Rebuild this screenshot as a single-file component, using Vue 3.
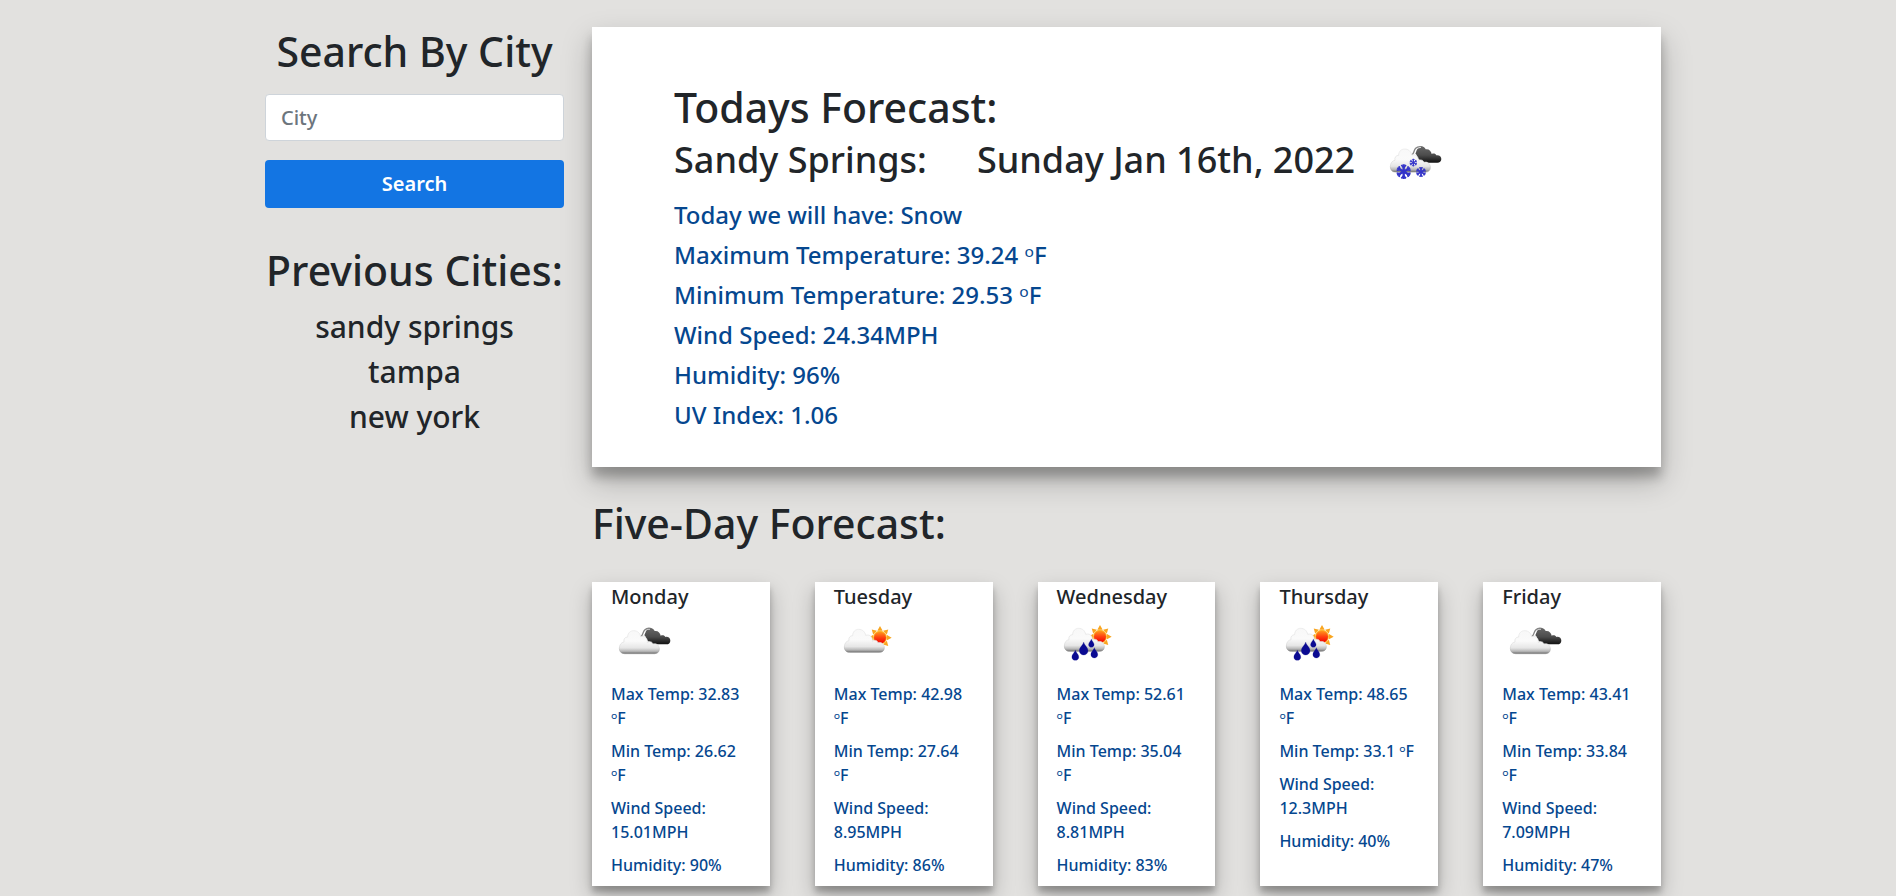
<script setup>
import { ref } from 'vue'

const city = ref('')
const previous = ['sandy springs', 'tampa', 'new york']
const details = [
  { text: 'Today we will have: Snow' },
  { text: 'Maximum Temperature: 39.24', degrees: true },
  { text: 'Minimum Temperature: 29.53', degrees: true },
  { text: 'Wind Speed: 24.34MPH' },
  { text: 'Humidity: 96%' },
  { text: 'UV Index: 1.06' },
]
const days = [
  { name: 'Monday', icon: 'clouds', max: '32.83', min: '26.62', wind: '15.01', humidity: 90 },
  { name: 'Tuesday', icon: 'sun', max: '42.98', min: '27.64', wind: '8.95', humidity: 86 },
  { name: 'Wednesday', icon: 'rain', max: '52.61', min: '35.04', wind: '8.81', humidity: 83 },
  { name: 'Thursday', icon: 'rain', max: '48.65', min: '33.1', wind: '12.3', humidity: 40 },
  { name: 'Friday', icon: 'clouds', max: '43.41', min: '33.84', wind: '7.09', humidity: 47 },
]
const rays = [0, 45, 90, 135, 180, 225, 270, 315]
</script>

<template>
  <svg class="defs" aria-hidden="true">
    <defs>
      <linearGradient id="white-cloud" x1="0" y1="0" x2="0" y2="1">
        <stop offset="0" stop-color="#f8f8f8" />
        <stop offset=".45" stop-color="#fafafa" />
        <stop offset=".75" stop-color="#e6e6e6" />
        <stop offset=".9" stop-color="#b5b5b5" />
        <stop offset="1" stop-color="#6c6c6c" />
      </linearGradient>
      <linearGradient id="cloud-rim" x1="0" y1="0" x2="0" y2="1">
        <stop offset="0" stop-color="#e6e6e6" />
        <stop offset=".7" stop-color="#dadada" />
        <stop offset="1" stop-color="#8c8c8c" />
      </linearGradient>
      <linearGradient id="dark-cloud" x1="0" y1="0" x2="0" y2="1">
        <stop offset="0" stop-color="#686868" />
        <stop offset=".55" stop-color="#4c4c4c" />
        <stop offset="1" stop-color="#111" />
      </linearGradient>
      <linearGradient id="sun-core" x1="0" y1="0" x2="0" y2="1">
        <stop offset="0" stop-color="#ff9a1c" />
        <stop offset=".5" stop-color="#ff4010" />
        <stop offset="1" stop-color="#f00000" />
      </linearGradient>
      <path
        id="cloud-shape"
        d="M44 116C33 116 28 109 28 100C28 89 34 82 42 81C40 72 45 66 53 66C53 54 61 47 71 47C82 47 90 54 92 65C104 61 114 70 112 83C118 78 126 79 129 87C141 84 148 92 148 102C148 111 142 116 134 116Z"
        fill="url(#white-cloud)"
        stroke="url(#cloud-rim)"
        stroke-width="2"
      />
      <g id="dark-back">
        <path d="M93 65C96 59 100 57 104 55C104 45 110 38 118 38C126 38 132 43 134 48C143 46 151 53 152 62C158 59 164 61 166 66C174 64 181 69 181 77C181 84 176 88 169 88H132C126 88 121 87 120 80C111 79 107 72 107 65L102 59Z" fill="url(#dark-cloud)" />
        <path d="M92 66C96 58 101 61 102 53C104 44 112 39 120 40" fill="none" stroke="#fff" stroke-width="8" />
        <path d="M92 65C101 59 97 52 104 45C109 40 115 39 121 40" fill="none" stroke="#858585" stroke-width="4" />
      </g>
      <path id="drop" d="M0-19C2-9 13-4 13 8C13 15 7 20 0 20S-13 15-13 8C-13-4-2-9 0-19Z" fill="#0a0a92" stroke="#10108c" stroke-opacity=".35" stroke-width="2" />
      <g id="flake" fill="none" stroke="#3535c9">
        <path d="M0-22V22M-19-11L19 11M-19 11L19-11" stroke-width="7" />
        <path d="M-7-20L0-12L7-20M-7 20L0 12L7 20M-21-4L-11-6L-14-16M21 4L11 6L14 16M-21 4L-11 6L-14 16M21-4L11-6L14-16" stroke-width="5" />
      </g>
    </defs>
  </svg>

  <main class="page">
    <aside class="sidebar">
      <form class="search" @submit.prevent>
        <h1><label for="city">Search By City</label></h1>
        <input id="city" v-model="city" type="text" placeholder="City" />
        <button type="submit">Search</button>
      </form>
      <section class="previous">
        <h1>Previous Cities:</h1>
        <ul>
          <li v-for="name in previous" :key="name">{{ name }}</li>
        </ul>
      </section>
    </aside>

    <div class="content">
      <section class="today">
        <h1>Todays Forecast:</h1>
        <div class="headline">
          <h2>Sandy Springs:</h2>
          <h2 class="date">Sunday Jan 16th, 2022</h2>
          <svg class="icon" viewBox="0 0 210 180" role="img" aria-label="Snow">
            <g transform="translate(0 10)">
              <use href="#dark-back" />
              <use href="#cloud-shape" />
              <use href="#flake" transform="translate(68 115)" />
              <use href="#flake" transform="translate(97 88) scale(.52)" />
              <use href="#flake" transform="translate(120 116) scale(.68)" />
            </g>
          </svg>
        </div>
        <p v-for="line in details" :key="line.text">
          {{ line.text }} <span v-if="line.degrees"><span class="degree">ᵒ</span>F</span>
        </p>
      </section>

      <h1 class="section-title">Five-Day Forecast:</h1>

      <section class="days">
        <article v-for="day in days" :key="day.name" class="day">
          <h5>{{ day.name }}</h5>
          <svg class="icon" viewBox="0 0 210 180" role="img" :aria-label="day.icon">
            <g v-if="day.icon === 'clouds'" transform="translate(-3 0)">
              <use href="#dark-back" />
              <use href="#cloud-shape" />
            </g>
            <g v-else :transform="day.icon === 'sun' ? 'translate(3 -4)' : 'translate(-6 -7)'">
              <g transform="translate(135 72)">
                <path
                  v-for="angle in rays"
                  :key="angle"
                  d="M-8-21L0-35L8-21Z"
                  fill="#f9a51e"
                  :transform="`rotate(${angle})`"
                />
                <circle r="21" fill="#ffb52b" />
                <circle r="18" fill="url(#sun-core)" />
              </g>
              <use href="#cloud-shape" />
              <g v-if="day.icon === 'rain'">
                <use href="#drop" transform="translate(86 107)" />
                <use href="#drop" transform="translate(109 91) scale(.65)" />
                <use href="#drop" transform="translate(61 127) scale(.8)" />
                <use href="#drop" transform="translate(118 120) scale(.8)" />
              </g>
            </g>
          </svg>
          <p>Max Temp: {{ day.max }} <span class="degree">ᵒ</span>F</p>
          <p>Min Temp: {{ day.min }} <span class="degree">ᵒ</span>F</p>
          <p>Wind Speed: {{ day.wind }}MPH</p>
          <p>Humidity: {{ day.humidity }}%</p>
        </article>
      </section>
    </div>
  </main>
</template>

<style>
body {
  background: #e2e1df;
}
</style>

<style scoped>
.defs {
  position: absolute;
  width: 0;
  height: 0;
}
.page {
  box-sizing: border-box;
  max-width: 1426px;
  margin: 0 auto;
  padding: 27px 0 10px 30px;
  display: grid;
  grid-template-columns: 299px minmax(0, 1fr);
  gap: 28px;
  color: #212529;
  font-family: "Noto Sans", sans-serif;
  font-weight: 500;
}
h1,
h2,
h5,
p,
ul {
  margin: 0;
  padding: 0;
  font-weight: 500;
}
h1 {
  font-size: 41px;
  line-height: 48px;
}
h2 {
  font-size: 36px;
  line-height: 44px;
}
.search {
  display: flex;
  flex-direction: column;
  text-align: center;
}
input {
  box-sizing: border-box;
  height: 47px;
  margin-top: 19px;
  padding: 0 15px;
  border: 1px solid #ced4da;
  border-radius: 4px;
  background: #fff;
  color: #495057;
  font: 500 20px "Noto Sans", sans-serif;
}
input::placeholder {
  color: #6c757d;
}
button {
  height: 48px;
  margin-top: 19px;
  padding-bottom: 2px;
  border: 0;
  border-radius: 4px;
  background: #1375e3;
  color: #fff;
  font: 600 20px "Noto Sans", sans-serif;
}
.previous {
  margin-top: 38px;
  text-align: center;
  white-space: nowrap;
}
.previous ul {
  margin-top: 10px;
  list-style: none;
  font-size: 30px;
  line-height: 45px;
}
.today {
  padding: 56px 82px 32px;
  background: #fff;
  box-shadow: 0 14px 28px rgba(0, 0, 0, 0.25), 0 10px 10px rgba(0, 0, 0, 0.22);
}
.headline {
  display: flex;
  align-items: center;
  height: 57px;
  margin-bottom: 7px;
}
.date {
  margin-left: 50px;
}
.icon {
  display: block;
  width: 70px;
  height: 60px;
}
.headline .icon {
  margin-left: 26px;
}
p {
  color: #05478f;
}
.degree {
  font-weight: 400;
}
.today p {
  font-size: 24px;
  line-height: 40px;
}
.section-title {
  margin-top: 32px;
}
.days {
  display: grid;
  grid-template-columns: repeat(5, minmax(0, 1fr));
  gap: 45px;
  margin-top: 35px;
}
.day {
  padding: 0 16px 0 19px;
  background: #fff;
  box-shadow: 0 10px 20px rgba(0, 0, 0, 0.25), 0 6px 6px rgba(0, 0, 0, 0.22);
}
h5 {
  font-size: 20px;
  line-height: 30px;
}
.day .icon {
  margin: 3px 0 7px;
}
.day p {
  margin-bottom: 9px;
  font-size: 16px;
  line-height: 24px;
}
</style>
